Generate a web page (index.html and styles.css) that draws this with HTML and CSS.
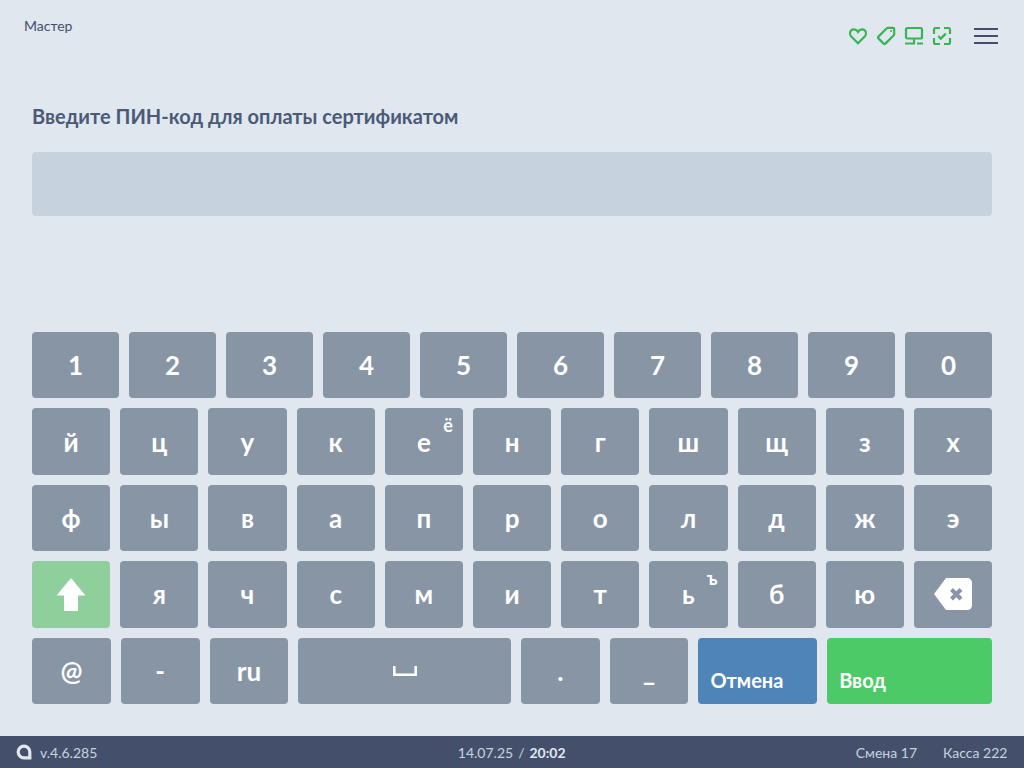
FILE: index.html
```html
<!DOCTYPE html>
<html lang="ru">
<head>
    <meta charset="UTF-8">
    <meta name="viewport" content="width=device-width, initial-scale=1.0">
    <title>Мастер</title>
    <link rel="stylesheet" href="styles.css">
</head>
<body>

    <div class="header">
        <div class="user-name">Мастер</div>
        <div class="header-right">
            <div class="status-icons">
                <svg class="status-icon" viewBox="0 0 20 20"><path d="M10 17.200 3 10.200C.8 7.800 2.200 3.600 5.600 3.400 7.400 3.300 9 4.200 10 5.800 11 4.200 12.600 3.300 14.400 3.400 17.800 3.600 19.200 7.800 17 10.200Z"/></svg>
                <svg class="status-icon" viewBox="0 0 20 20"><path d="M2.400 10.600 10.800 2.200C11.100 1.900 11.500 1.800 11.900 1.800L17 1.800C17.700 1.800 18.200 2.300 18.200 3L18.200 8.100C18.200 8.500 18.100 8.900 17.800 9.200L9.400 17.600C8.900 18.100 8.100 18.100 7.600 17.600L2.400 12.400C1.900 11.900 1.900 11.100 2.400 10.600Z"/><path class="tag-hole" d="M14.500 4.500h1v1h-1z"/></svg>
                <svg class="status-icon" viewBox="0 0 20 20"><rect x="2" y="2" width="16" height="10.500" rx="1.500"/><path d="M10 12.500V17.500M1 17.500H11M13 17.500H19"/></svg>
                <svg class="status-icon" viewBox="0 0 20 20"><path d="M2 8V3.800C2 2.600 2.600 2 3.800 2H8M12 2H16.200C17.400 2 18 2.600 18 3.800V8M18 12V16.200C18 17.400 17.400 18 16.200 18H12M8 18H3.800C2.600 18 2 17.400 2 16.200V12M6.200 10 8.800 12.600 13.800 7.600"/></svg>
            </div>
            <div class="menu-btn">
                <span></span>
                <span></span>
                <span></span>
            </div>
        </div>
    </div>

    <div class="content">
        <h1 class="title">Введите ПИН-код для оплаты сертификатом</h1>
        <div class="pin-input"></div>

        <!-- Keyboard -->
        <div class="keyboard">
            <div class="row">
                <div class="key">1</div>
                <div class="key">2</div>
                <div class="key">3</div>
                <div class="key">4</div>
                <div class="key">5</div>
                <div class="key">6</div>
                <div class="key">7</div>
                <div class="key">8</div>
                <div class="key">9</div>
                <div class="key">0</div>
            </div>
            <div class="row">
                <div class="key">й</div>
                <div class="key">ц</div>
                <div class="key">у</div>
                <div class="key">к</div>
                <div class="key">е<span class="alt">ё</span></div>
                <div class="key">н</div>
                <div class="key">г</div>
                <div class="key">ш</div>
                <div class="key">щ</div>
                <div class="key">з</div>
                <div class="key">х</div>
            </div>
            <div class="row">
                <div class="key">ф</div>
                <div class="key">ы</div>
                <div class="key">в</div>
                <div class="key">а</div>
                <div class="key">п</div>
                <div class="key">р</div>
                <div class="key">о</div>
                <div class="key">л</div>
                <div class="key">д</div>
                <div class="key">ж</div>
                <div class="key">э</div>
            </div>
            <div class="row">
                <div class="key key-shift">
                    <svg class="shift-icon" viewBox="0 0 30 33"><path d="M15 0 29.500 17.500H22V33H8V17.500H.5Z"/></svg>
                </div>
                <div class="key">я</div>
                <div class="key">ч</div>
                <div class="key">с</div>
                <div class="key">м</div>
                <div class="key">и</div>
                <div class="key">т</div>
                <div class="key">ь<span class="alt">ъ</span></div>
                <div class="key">б</div>
                <div class="key">ю</div>
                <div class="key">
                    <svg class="back-icon" viewBox="0 0 38 32"><path class="back-shape" d="M12 0H33C36 0 38 2 38 5V27C38 30 36 32 33 32H12L0 16Z"/><path class="back-cross" d="M17.500 11.500 27 21M27 11.500 17.500 21"/></svg>
                </div>
            </div>
            <div class="row">
                <div class="key key-small">@</div>
                <div class="key key-small">-</div>
                <div class="key key-small">ru</div>
                <div class="key key-space">
                    <svg class="space-icon" viewBox="0 0 24 10"><path d="M1.300 0V8.700H22.700V0"/></svg>
                </div>
                <div class="key key-small">.</div>
                <div class="key key-small">_</div>
                <div class="key key-action key-cancel">Отмена</div>
                <div class="key key-action key-enter">Ввод</div>
            </div>
        </div>
    </div>

    <div class="footer">
        <div class="footer-left">
            <svg class="logo" viewBox="0 0 16 16"><path d="M8 2.200C11.200 2.200 13.800 4.800 13.800 8V13.800H8C4.800 13.800 2.200 11.200 2.200 8S4.800 2.200 8 2.200Z"/></svg>
            <span>v.4.6.285</span>
        </div>
        <div class="footer-center"><span>14.07.25</span><span class="sep">/</span><b>20:02</b></div>
        <div class="footer-right">
            <span>Смена 17</span>
            <span>Касса 222</span>
        </div>
    </div>

</body>
</html>
```

FILE: styles.css
```css
body {
    font-family: Lato, "Noto Sans", sans-serif;
    margin: 0;
    height: 768px;
    overflow: hidden;
    display: flex;
    flex-direction: column;
    background: #e0e7ef;
    color: #44506b;
}
.header {
    height: 68px;
    padding: 0 24px;
    display: flex;
    justify-content: space-between;
}
.user-name {
    margin-top: 17px;
    font-size: 14px;
    line-height: 17px;
}
.header-right {
    display: flex;
    align-items: flex-start;
    margin-top: 26px;
    margin-right: 2px;
}
.status-icons {
    display: flex;
    gap: 8px;
}
.status-icon {
    width: 20px;
    height: 20px;
    fill: none;
    stroke: #38b552;
    stroke-width: 2.2;
}
.tag-hole {
    stroke-width: 1;
}
.menu-btn {
    margin-left: 22px;
    margin-top: 2px;
    width: 24px;
    display: flex;
    flex-direction: column;
    gap: 5px;
}
.menu-btn span {
    height: 2px;
    background: #44506b;
}
.content {
    flex: 1;
    padding: 0 32px;
    display: flex;
    flex-direction: column;
}
.title {
    margin: 35px 0 0;
    font-size: 20px;
    line-height: 26px;
    font-weight: 700;
    color: #4a5a78;
}
.pin-input {
    margin-top: 23px;
    height: 64px;
    border-radius: 4px;
    background: #c6d3df;
}
.keyboard {
    margin-top: 116px;
    height: 372px;
    display: flex;
    flex-direction: column;
    gap: 10px;
}
.row {
    flex: 1;
    display: flex;
    gap: 10px;
}
.key {
    flex: 1;
    position: relative;
    display: flex;
    align-items: center;
    justify-content: center;
    border-radius: 4px;
    background: #8795a5;
    color: #fff;
    font-size: 26px;
    font-weight: 700;
}
.alt {
    position: absolute;
    top: 7px;
    right: 10px;
    font-size: 18px;
    line-height: 20px;
}
.key-shift {
    background: #8fcf9c;
}
.shift-icon {
    width: 30px;
    height: 33px;
    fill: #fff;
}
.back-icon {
    width: 38px;
    height: 32px;
}
.back-shape {
    fill: #fff;
}
.back-cross {
    fill: none;
    stroke: #8795a5;
    stroke-width: 4;
}
.key-small {
    flex: 78.76;
}
.key-space {
    flex: 212.6;
}
.space-icon {
    width: 24px;
    height: 10px;
    fill: none;
    stroke: #fff;
    stroke-width: 2.6;
}
.key-action {
    align-items: flex-end;
    justify-content: flex-start;
    padding: 0 12px 11px;
    font-size: 20px;
    line-height: 26px;
}
.key-cancel {
    flex: 94.7;
    background: #4f84b8;
}
.key-enter {
    flex: 140.9;
    background: #4bca67;
}
.footer {
    height: 32px;
    padding: 0 16.6px 0 16px;
    display: grid;
    grid-template-columns: 1fr auto 1fr;
    align-items: center;
    background: #44506b;
    color: #c6d3df;
    font-size: 14px;
}
.footer-left {
    display: flex;
    align-items: center;
    gap: 8px;
}
.logo {
    width: 16px;
    height: 16px;
    fill: none;
    stroke: #e0e7ef;
    stroke-width: 3.2;
}
.sep {
    margin: 0 5px;
}
.footer-center b {
    font-weight: 700;
    color: #e0e7ef;
}
.footer-right {
    display: flex;
    justify-content: flex-end;
    gap: 26px;
}
```
